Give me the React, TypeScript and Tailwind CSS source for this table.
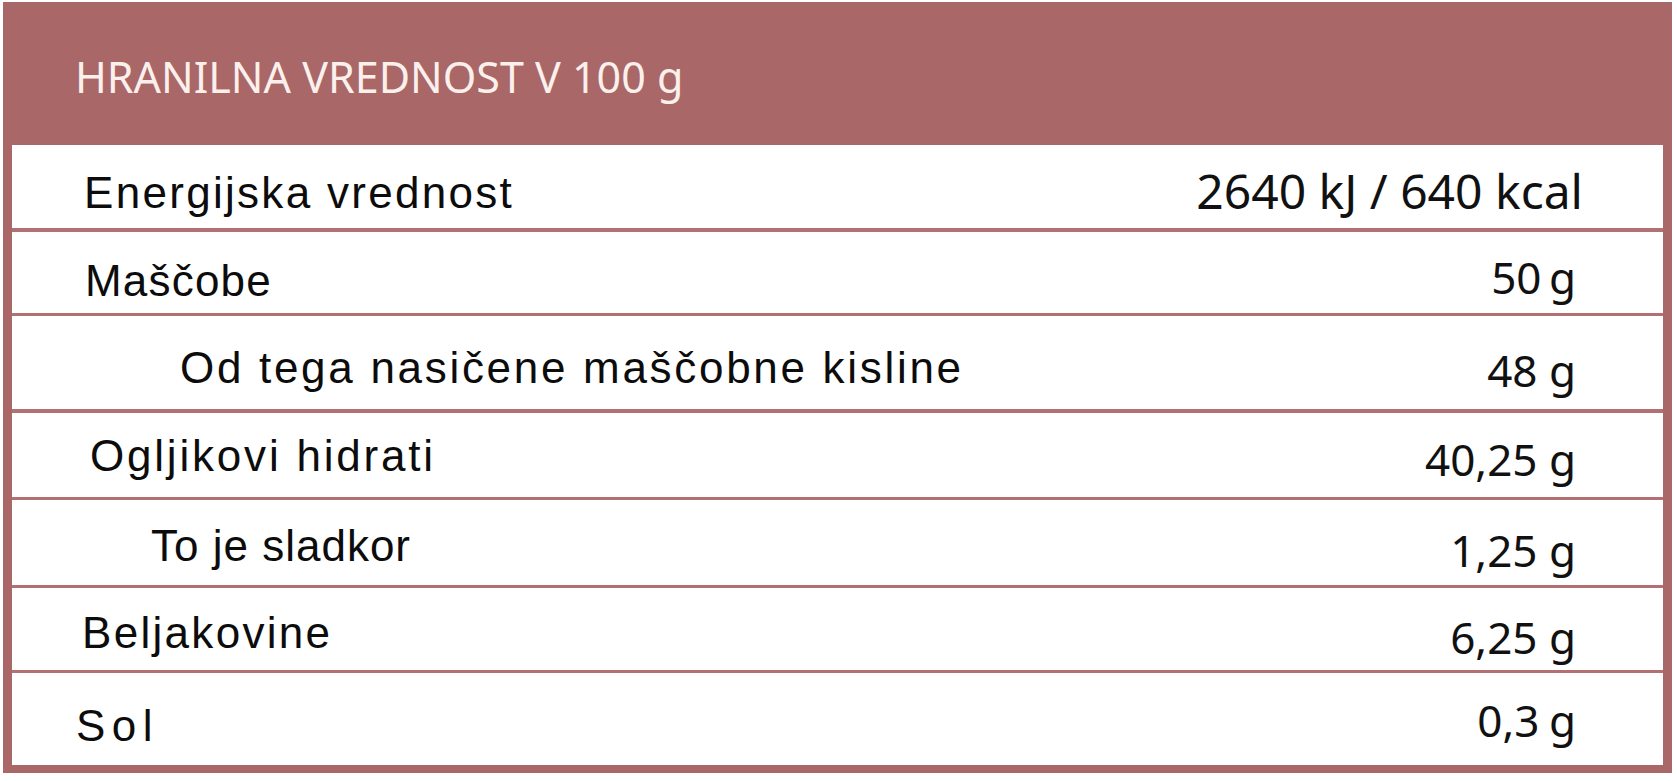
type Row = {
  label: string;
  value: string;
  rowClass: string;
  labelClass: string;
  valueClass: string;
};

const rows: Row[] = [
  {
    label: 'Energijska vrednost',
    value: '2640 kJ / 640 kcal',
    rowClass: 'h-[83px]',
    labelClass: 'pl-[72px] pt-[26px] tracking-[2.3px]',
    valueClass: 'pr-[80px] pt-[22px] text-[48px]',
  },
  {
    label: 'Maščobe',
    value: '50 g',
    rowClass: 'h-[81px] mt-[4px]',
    labelClass: 'pl-[73px] pt-[27px] tracking-[1.2px]',
    valueClass: 'pr-[87px] pt-[23px] text-[44px] [word-spacing:-4px]',
  },
  {
    label: 'Od tega nasičene maščobne kisline',
    value: '48 g',
    rowClass: 'h-[93px] mt-[3px]',
    labelClass: 'pl-[168px] pt-[30px] tracking-[2.7px]',
    valueClass: 'pr-[87px] pt-[32px] text-[44px]',
  },
  {
    label: 'Ogljikovi hidrati',
    value: '40,25 g',
    rowClass: 'h-[84px] mt-[4px]',
    labelClass: 'pl-[78px] pt-[21px] tracking-[2.8px]',
    valueClass: 'pr-[87px] pt-[24px] text-[44px]',
  },
  {
    label: 'To je sladkor',
    value: '1,25 g',
    rowClass: 'h-[85px] mt-[3px]',
    labelClass: 'pl-[139px] pt-[24px] tracking-[1px]',
    valueClass: 'pr-[87px] pt-[28px] text-[44px]',
  },
  {
    label: 'Beljakovine',
    value: '6,25 g',
    rowClass: 'h-[82px] mt-[3px]',
    labelClass: 'pl-[70px] pt-[23px] tracking-[2.3px]',
    valueClass: 'pr-[87px] pt-[27px] text-[44px]',
  },
  {
    label: 'Sol',
    value: '0,3 g',
    rowClass: 'h-[92px] mt-[3px]',
    labelClass: 'pl-[64px] pt-[31px] tracking-[6.5px]',
    valueClass: 'pr-[87px] pt-[25px] text-[44px] [word-spacing:-2px]',
  },
];

export default function App() {
  return (
    <div className="h-[781px] w-[1677px] bg-white pl-[3px] pt-[2px]">
      <div className="w-[1669px] bg-[#a96768] pb-[8px]">
        {/* header band */}
        <div className="h-[143px] pl-[72px] pt-[53px]">
          <h1 className="font-['Noto_Sans',sans-serif] text-[43px] font-normal leading-[43px] text-[#fbf0ec]">
            HRANILNA VREDNOST V 100 g
          </h1>
        </div>

        <div className="flex flex-col bg-[#b27072] mx-[9px]">
          {rows.map((r) => (
            <div key={r.label} className={`flex justify-between bg-white ${r.rowClass}`}>
              <span
                className={`font-['Liberation_Sans',Arial,sans-serif] text-[44px] leading-[44px] text-[#0c0c0c] whitespace-nowrap ${r.labelClass}`}
              >
                {r.label}
              </span>
              <span
                className={`font-['Noto_Sans',sans-serif] leading-none text-[#111111] whitespace-nowrap ${r.valueClass}`}
              >
                {r.value}
              </span>
            </div>
          ))}
        </div>
      </div>
    </div>
  );
}
